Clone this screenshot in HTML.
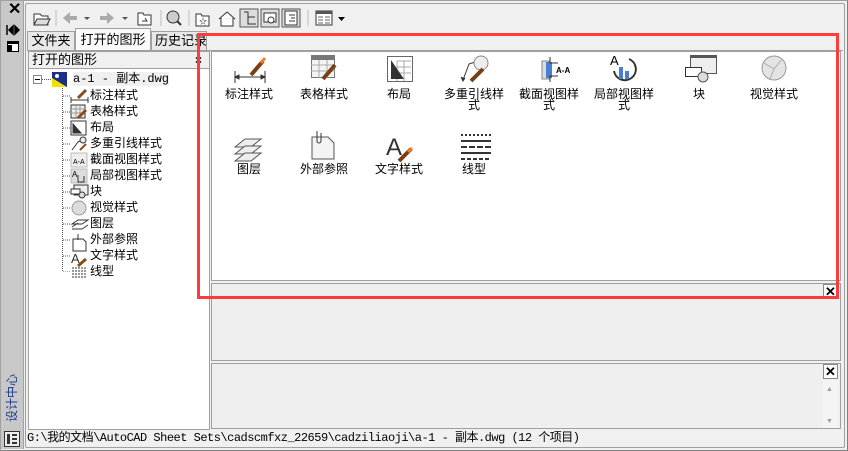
<!DOCTYPE html>
<html><head><meta charset="utf-8"><style>
*{box-sizing:border-box;margin:0;padding:0}
body{width:848px;height:451px;background:#f0f0f0;font-family:"Liberation Sans","Noto Sans CJK SC",sans-serif;font-size:12px;color:#000;position:relative;overflow:hidden}
.abs{position:absolute}
.lbl{position:absolute;width:76px;text-align:center;font-size:12px;line-height:11px}
.tree div{position:absolute;left:90px;font-size:12px;line-height:14px}
</style></head><body>
<div class="abs" style="left:0;top:0;width:848px;height:451px;border:1px solid #a0a0a0;border-right-color:#808080;border-bottom-color:#808080"></div>
<div class="abs" style="left:1px;top:1px;width:23px;height:448px;background:#c8c8c8;border-right:1px solid #a0a0a0"></div>
<div class="abs" style="left:8px;top:2px;font-weight:bold;font-size:16px;line-height:16px">✕</div>
<svg class="abs" style="left:6px;top:24px" width="14" height="12"><path d="M1 1v10M3 6l4-4v8zM13 6l-4-4v8z" fill="#000" stroke="#000" stroke-width="1.5"/></svg>
<svg class="abs" style="left:7px;top:41px" width="12" height="11"><rect x="0.5" y="0.5" width="11" height="10" fill="#fff" stroke="#000"/><rect x="0" y="0" width="12" height="3" fill="#000"/><rect x="1" y="4" width="4" height="6" fill="#000"/></svg>
<div class="abs" style="left:-13px;top:391px;width:50px;height:14px;font-size:12px;line-height:14px;color:#1a3b8a;white-space:nowrap;text-align:center;transform:rotate(-90deg)">设计中心</div>
<svg class="abs" style="left:4px;top:431px" width="16" height="16"><rect x=".5" y=".5" width="15" height="15" fill="#eee" stroke="#333"/><path d="M3 3h3v10H3zM8 3h5v2H8zM8 7h5v2H8zM8 11h5v2H8z" fill="#333"/></svg>

<div class="abs" style="left:25px;top:3px;width:820px;height:445px;border:1px solid #a0a0a0;border-radius:2px"></div>
<svg class="abs" style="left:30px;top:8px" width="330" height="20">
<path d="M4 6h6l2 2h6v9H4z" fill="#fff" stroke="#333"/><path d="M4 17l3-6h13l-3 6z" fill="#ddd" stroke="#333"/>
<line x1="26" y1="2" x2="26" y2="18" stroke="#bbb"/>
<path d="M33 10l7-6v4h7v4h-7v4z" fill="#aaa"/><path d="M54 9h6l-3 3z" fill="#555"/>
<path d="M84 10l-7-6v4h-7v4h7v4z" fill="#aaa"/><path d="M92 9h6l-3 3z" fill="#555"/>
<path d="M108 5h5l1 2h7v10h-13z" fill="#fff" stroke="#333"/><path d="M112 13h5l-2-3" fill="none" stroke="#333"/>
<line x1="131" y1="2" x2="131" y2="18" stroke="#bbb"/>
<circle cx="143" cy="9" r="6" fill="#ccc" stroke="#333"/><line x1="147" y1="13" x2="151" y2="17" stroke="#333" stroke-width="2"/>
<line x1="159" y1="2" x2="159" y2="18" stroke="#bbb"/>
<path d="M166 6h5l1 2h7v10h-13z" fill="#fff" stroke="#333"/><text x="169" y="16" font-size="8">☆</text>
<path d="M189 11l8-7 8 7M191 10v8h12v-8" fill="#fff" stroke="#333"/>
<rect x="210" y="1" width="18" height="18" fill="#ddd" stroke="#555"/><path d="M214 4h4v12h8M218 9h7" stroke="#333" fill="none"/>
<rect x="231" y="1" width="18" height="18" fill="#ddd" stroke="#555"/><rect x="234" y="5" width="12" height="9" fill="#fff" stroke="#333"/><circle cx="241" cy="12" r="3" fill="#fff" stroke="#333"/>
<rect x="252" y="1" width="18" height="18" fill="#ddd" stroke="#555"/><rect x="255" y="3" width="12" height="14" fill="#fff" stroke="#333"/><path d="M259 7h6M261 10h4M259 13h6" stroke="#333"/>
<line x1="278" y1="2" x2="278" y2="18" stroke="#bbb"/>
<rect x="286" y="3" width="16" height="14" fill="#fff" stroke="#333"/><rect x="286" y="3" width="16" height="3" fill="#555"/><path d="M288 9h5M295 9h5M288 12h5M295 12h5M288 15h5M295 15h5" stroke="#666"/>
<path d="M308 9h7l-3.5 4z" fill="#000"/>
</svg>
<div class="abs" style="left:27px;top:31px;width:48px;height:20px;border:1px solid #a0a0a0;border-bottom:none;background:#e8e8e8;font-size:13px;line-height:18px;text-align:center">文件夹</div>
<div class="abs" style="left:75px;top:28px;width:76px;height:23px;border:1px solid #a0a0a0;border-bottom:none;background:#fafafa;font-size:13px;line-height:21px;text-align:center">打开的图形</div>
<div class="abs" style="left:151px;top:31px;width:56px;height:20px;border:1px solid #a0a0a0;border-bottom:none;background:#e8e8e8;font-size:13px;line-height:18px;padding-left:3px;overflow:hidden;white-space:nowrap">历史记录</div>
<div class="abs" style="left:27px;top:50px;width:816px;height:1px;background:#a0a0a0"></div>

<div class="abs" style="left:28px;top:51px;width:182px;height:379px;border:1px solid #a0a0a0;background:#fff"></div>
<div class="abs" style="left:29px;top:52px;width:180px;height:17px;background:#f0f0f0;border-bottom:1px solid #a0a0a0;font-size:13px;line-height:16px;padding-left:3px">打开的图形</div>
<div class="abs" style="left:195px;top:53px;font-size:12px;font-weight:bold;line-height:14px">×</div>
<div class="tree">
<svg class="abs" style="left:33px;top:72px" width="60" height="200">
<rect x="0.5" y="3.5" width="8" height="8" fill="#fff" stroke="#888"/><line x1="2" y1="7.5" x2="7" y2="7.5" stroke="#000"/>
<path d="M9 7.5h9" stroke="#555" stroke-dasharray="1 1"/>
<path d="M29.5 14v186M30 24h8M30 40h8M30 56h8M30 72h8M30 88h8M30 104h8M30 120h8M30 136h8M30 152h8M30 168h8M30 184h8M30 200h8" stroke="#555" stroke-dasharray="1 1"/>
<rect x="19" y="0" width="15" height="15" fill="#1a2e8a"/><path d="M19 15V6l15 9z" fill="#f4e000"/><circle cx="24" cy="4" r="2" fill="#fff"/>
</svg>
<div style="left:73px;top:72px;font-family:'Liberation Mono','Noto Sans CJK SC',monospace;background:#f0f0f0">a-1 - 副本.dwg</div>
<div style="top:88px">标注样式</div><div style="top:104px">表格样式</div><div style="top:120px">布局</div><div style="top:136px">多重引线样式</div><div style="top:152px">截面视图样式</div><div style="top:168px">局部视图样式</div><div style="top:184px">块</div><div style="top:200px">视觉样式</div><div style="top:216px">图层</div><div style="top:232px">外部参照</div><div style="top:248px">文字样式</div><div style="top:264px">线型</div>
<svg class="abs" style="left:70px;top:88px" width="20" height="192" stroke="#333" fill="none">
<path d="M1 12h17M1 9v6M18 9v6"/><path d="M8 10l8-8" stroke="#8a4a1a" stroke-width="3"/>
<rect x="1" y="17" width="14" height="13" fill="#eee"/><path d="M1 21h14M1 25h14M6 17v13M10 17v13" stroke="#999"/><path d="M8 30l8-8" stroke="#8a4a1a" stroke-width="3"/>
<rect x="1" y="33" width="15" height="14" fill="#fff"/><path d="M3 45V36l8 9z" fill="#333"/>
<path d="M2 62l6-8 4-2" /><circle cx="13" cy="52" r="3" fill="#eee"/><path d="M10 62l6-6" stroke="#8a4a1a" stroke-width="2"/>
<rect x="1" y="65" width="16" height="14" fill="#eee" stroke="#bbb"/><text x="3" y="76" font-size="7" fill="#000" stroke="none">A-A</text>
<rect x="1" y="81" width="16" height="14" fill="#ddd" stroke="#bbb"/><text x="2" y="89" font-size="8" fill="#000" stroke="none">A</text><path d="M8 87v7h6v-6"/>
<rect x="4" y="97" width="14" height="10" fill="#eee"/><rect x="1" y="101" width="9" height="5" fill="#fff"/><circle cx="12" cy="107" r="3" fill="#ddd"/>
<circle cx="9" cy="120" r="7" fill="#ddd" stroke="#999"/>
<path d="M2 136l6-4h10l-6 4zM2 139l6-4M2 141h10l6-4"/>
<path d="M3 151h10l3 3v9H3z" fill="#fff"/><path d="M8 146v6"/>
<text x="1" y="175" font-size="13" fill="#333" stroke="none">A</text><path d="M8 178l8-7" stroke="#8a4a1a" stroke-width="3"/>
<path d="M2 180h15M2 183h15M2 186h15M2 189h15" stroke-dasharray="2 1"/>
</svg>
</div>

<div class="abs" style="left:211px;top:51px;width:630px;height:230px;background:#fff;border:1px solid #a0a0a0"></div>
<svg class="abs" style="left:211px;top:51px" width="630" height="130" stroke="#333" fill="none">
<path d="M24 26h30M24 20v12M54 20v12M24 26l4-2v4zM54 26l-4-2v4z" fill="#333"/><path d="M40 24l12-14" stroke="#7a3e14" stroke-width="4"/><path d="M50 12l4-5" stroke="#f08020" stroke-width="3"/>
<rect x="100.5" y="4.5" width="23" height="22" fill="#f4f4f4" stroke="#777"/><rect x="100" y="4" width="24" height="5" fill="#777" stroke="none"/><path d="M100 14h24M100 20h24M108 9v18M116 9v18" stroke="#aaa"/><path d="M112 28l12-14" stroke="#7a3e14" stroke-width="4"/>
<rect x="176.5" y="5.5" width="25" height="25" fill="#fff" stroke="#666"/><path d="M186 10h14M186 16h14M186 22h14M186 10v20M193 10v20" stroke="#aaa"/><path d="M180 28V9l13 19z" fill="#333" stroke="none"/>
<path d="M252 29l6-16 6-2"/><path d="M250 26l2 4 2-3" fill="#333"/><circle cx="270" cy="12" r="7" fill="#eee" stroke="#888"/><path d="M260 30l12-12" stroke="#7a3e14" stroke-width="4"/>
<rect x="331" y="10" width="7" height="18" fill="#ddd" stroke="#888"/><rect x="335" y="11" width="6" height="16" fill="#4a7fd0" stroke="none"/><path d="M339 6v6h8M339 31v-6h8"/><text x="345" y="22" font-size="8" fill="#000" stroke="none" font-weight="bold">A-A</text>
<text x="399" y="14" font-size="13" fill="#000" stroke="none">A</text><path d="M418 8a11 11 0 1 1 -15 12" stroke-width="2"/><rect x="408" y="16" width="4" height="12" fill="#4a7fd0" stroke="none"/><rect x="414" y="20" width="4" height="8" fill="#4a7fd0" stroke="none"/>
<rect x="479.5" y="4.5" width="26" height="18" fill="#eee" stroke="#555"/><rect x="479" y="4" width="27" height="3" fill="#555" stroke="none"/><rect x="474.5" y="16.5" width="16" height="9" fill="#fff" stroke="#333"/><circle cx="492" cy="26" r="5" fill="#ddd" stroke="#555"/>
<circle cx="563" cy="17" r="12" fill="#e4e4e4" stroke="#999"/><path d="M553 12l10 6 8-10M563 18l-4 10" stroke="#aaa"/>
<path d="M24 96l10-8h16l-10 8z" fill="#eee" stroke="#555"/><path d="M24 103l10-8h16l-10 8z" fill="#eee" stroke="#555"/><path d="M24 110l10-8h16l-10 8z" fill="#eee" stroke="#555"/>
<path d="M101 86h16l6 6v16h-22z" fill="#f4f4f4" stroke="#555"/><path d="M106 80v10a2 2 0 0 0 4 0v-8"/>
<text x="175" y="104" font-size="24" font-family="Liberation Sans" fill="#333" stroke="none">A</text><path d="M188 110l12-12" stroke="#7a3e14" stroke-width="4"/><path d="M197 101l4-4" stroke="#f08020" stroke-width="3"/>
<path d="M250 84h30" stroke-dasharray="2 2" stroke-width="2"/><path d="M250 90h30" stroke-width="2"/><path d="M250 96h30" stroke-dasharray="6 2" stroke-width="2"/><path d="M250 102h30" stroke-width="2"/><path d="M250 108h30" stroke-dasharray="4 2" stroke-width="2"/>
</svg>
<div class="lbl" style="left:211px;top:89px">标注样式</div>
<div class="lbl" style="left:286px;top:89px">表格样式</div>
<div class="lbl" style="left:361px;top:89px">布局</div>
<div class="lbl" style="left:436px;top:89px">多重引线样<br>式</div>
<div class="lbl" style="left:511px;top:89px">截面视图样<br>式</div>
<div class="lbl" style="left:586px;top:89px">局部视图样<br>式</div>
<div class="lbl" style="left:661px;top:89px">块</div>
<div class="lbl" style="left:736px;top:89px">视觉样式</div>
<div class="lbl" style="left:211px;top:164px">图层</div>
<div class="lbl" style="left:286px;top:164px">外部参照</div>
<div class="lbl" style="left:361px;top:164px">文字样式</div>
<div class="lbl" style="left:436px;top:164px">线型</div>

<div class="abs" style="left:211px;top:283px;width:630px;height:78px;border:1px solid #a0a0a0;background:#efefef"></div>
<div class="abs" style="left:823px;top:284px;width:15px;height:15px;border:1px solid #888;background:#fff;font-weight:bold;font-size:13px;line-height:13px;text-align:center">✕</div>
<div class="abs" style="left:211px;top:363px;width:630px;height:66px;border:1px solid #a0a0a0;background:#efefef"></div>
<div class="abs" style="left:823px;top:364px;width:15px;height:15px;border:1px solid #888;background:#fff;font-weight:bold;font-size:13px;line-height:13px;text-align:center">✕</div>
<div class="abs" style="left:823px;top:380px;width:15px;height:48px;background:#f4f4f4"></div>
<div class="abs" style="left:826px;top:386px;font-size:7px;color:#999">▲</div>
<div class="abs" style="left:826px;top:418px;font-size:7px;color:#999">▼</div>

<div class="abs" style="left:27px;top:431px;width:816px;font-family:'Liberation Mono','Noto Sans CJK SC',monospace;font-size:12px;line-height:14px;letter-spacing:-0.5px;white-space:nowrap">G:\我的文档\AutoCAD Sheet Sets\cadscmfxz_22659\cadziliaoji\a-1 - 副本.dwg (12 个项目)</div>

<div class="abs" style="left:197px;top:33px;width:642px;height:266px;border:3px solid #ff3b3b"></div>
</body></html>
